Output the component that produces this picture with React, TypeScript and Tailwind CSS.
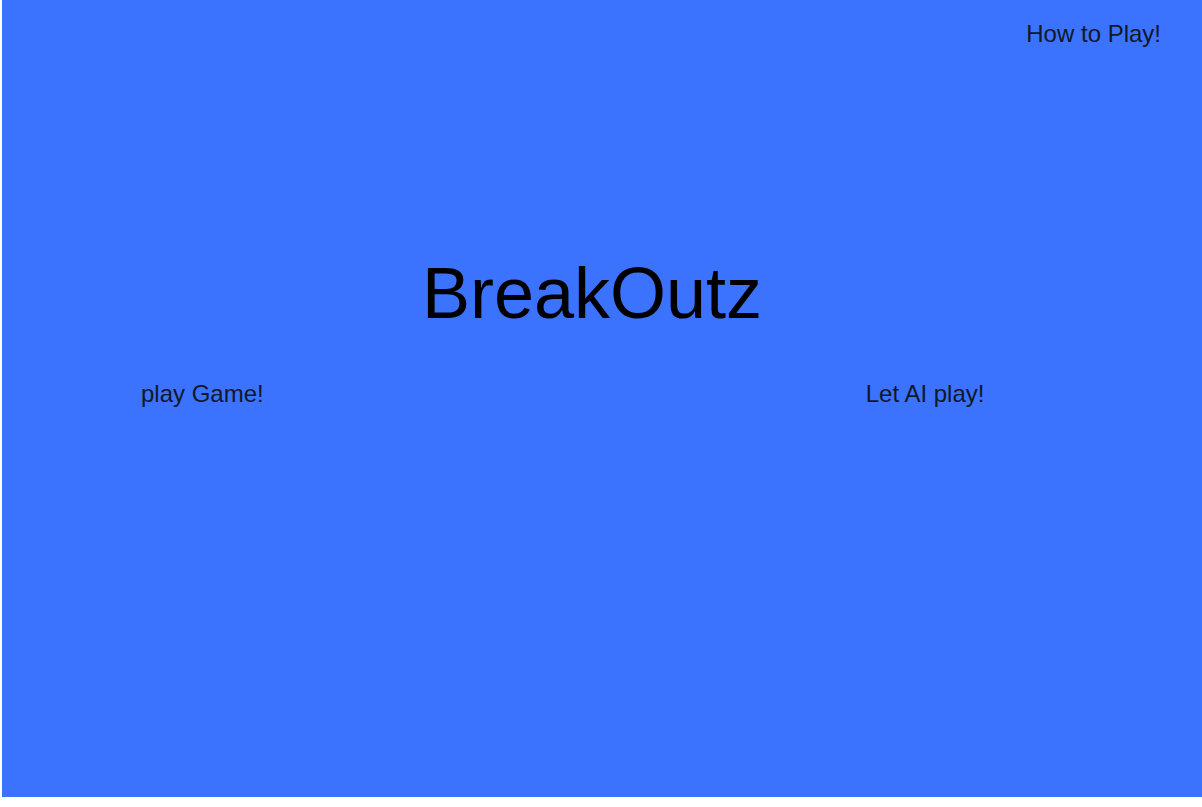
export default function App() {
  return (
    <div className="min-h-screen bg-white pl-[2px] font-['Liberation_Sans',Arial,sans-serif]">
      <div className="flex h-[797px] flex-col bg-[#3b73ff]">
        <div className="flex justify-end pr-[41px] pt-[20px]">
          <button className="text-[24px] leading-[28px] text-[#111827]">How to Play!</button>
        </div>
        <h1 className="mt-[205px] flex justify-center pr-[20px] text-[72px] leading-[80px] text-black">
          BreakOutz
        </h1>
        <div className="mt-[47px] flex">
          <button className="ml-[139px] text-[24px] leading-[28px] text-[#111827]">play Game!</button>
          <button className="ml-[602px] text-[24px] leading-[28px] text-[#111827]">Let AI play!</button>
        </div>
      </div>
    </div>
  )
}
